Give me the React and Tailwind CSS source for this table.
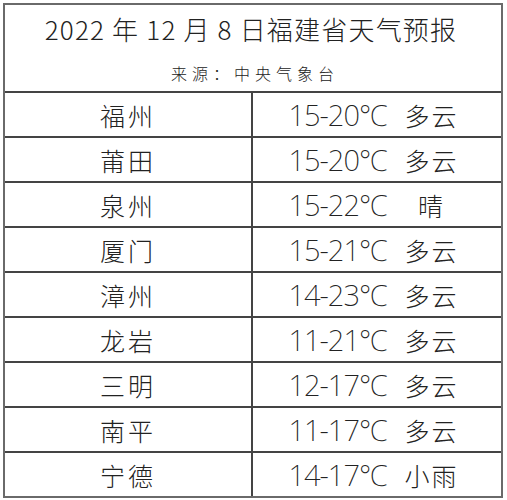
const ROWS = [
  { city: '福州', temp: '15-20℃', weather: '多云' },
  { city: '莆田', temp: '15-20℃', weather: '多云' },
  { city: '泉州', temp: '15-22℃', weather: '晴' },
  { city: '厦门', temp: '15-21℃', weather: '多云' },
  { city: '漳州', temp: '14-23℃', weather: '多云' },
  { city: '龙岩', temp: '11-21℃', weather: '多云' },
  { city: '三明', temp: '12-17℃', weather: '多云' },
  { city: '南平', temp: '11-17℃', weather: '多云' },
  { city: '宁德', temp: '14-17℃', weather: '小雨' },
];

export default function App() {
  return (
    <div className="w-[507px] h-[500px] overflow-hidden bg-white pt-[3px] pl-[3px] text-[#222] font-light font-['Noto_Sans_CJK_SC',sans-serif]">
      <div className="w-[500px] border-2 border-[#6a6a6a] flex flex-col">
        {/* header */}
        <div className="h-[88px] border-b-2 border-[#444] flex flex-col items-center">
          <h1 className="mt-[7px] text-[26px] leading-[34px] font-light tracking-[1.2px] pr-[4px] whitespace-nowrap">
            2022 年 12 月 8 日福建省天气预报
          </h1>
          <p className="mt-[17px] text-[16px] leading-[20px] tracking-[5px] pl-[4px] whitespace-nowrap">
            来源：中央气象台
          </p>
        </div>

        {ROWS.map((row, i) => (
          <div
            key={row.city}
            className={`grid grid-cols-[248px_1fr] overflow-hidden ${
              i < ROWS.length - 1 ? 'h-[45px] border-b-2 border-[#444]' : 'h-[43px]'
            }`}
          >
            <div className="border-r-2 border-[#444] flex items-center justify-center">
              <span className="text-[25px] leading-[30px] tracking-[3px] whitespace-nowrap">{row.city}</span>
            </div>
            <div className="flex items-center justify-center pr-[7px] whitespace-nowrap">
              <span className="shrink-0 text-[29px] leading-[30px] tracking-[-1px] font-extralight font-['Noto_Sans',sans-serif]">
                {row.temp}
              </span>
              <span className="ml-[16px] w-[56px] shrink-0 text-center text-[25px] leading-[30px] tracking-[2px] pl-[2px]">
                {row.weather}
              </span>
            </div>
          </div>
        ))}
      </div>
    </div>
  );
}
